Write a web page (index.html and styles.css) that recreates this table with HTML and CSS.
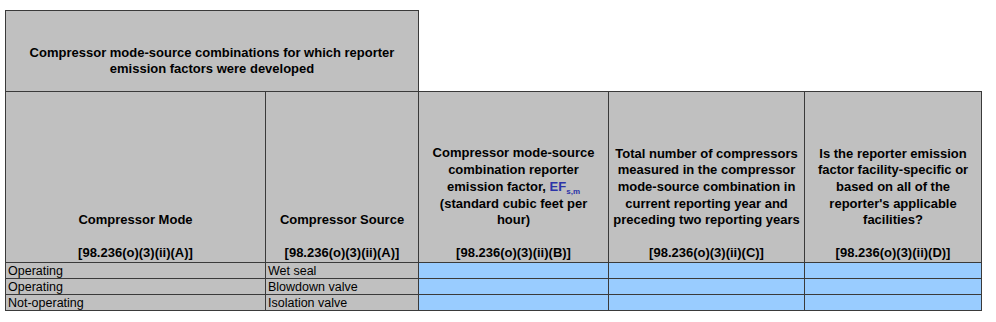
FILE: index.html
```html
<!DOCTYPE html>
<html>
<head>
<meta charset="utf-8">
<link rel="stylesheet" href="styles.css">
</head>
<body>
<table class="sheet">
  <colgroup>
    <col class="c1"><col class="c2"><col class="c3"><col class="c4"><col class="c5">
  </colgroup>
  <tr class="r-title">
    <td class="hd title" colspan="2">Compressor mode-source combinations for which reporter<br>emission factors were developed</td>
    <td class="blank" colspan="3"></td>
  </tr>
  <tr class="r-head">
    <td class="hd">Compressor Mode<br><br>[98.236(o)(3)(ii)(A)]</td>
    <td class="hd">Compressor Source<br><br>[98.236(o)(3)(ii)(A)]</td>
    <td class="hd">Compressor mode-source<br>combination reporter<br>emission factor, <span class="ef">EF<span class="sub">s,m</span></span><br>(standard cubic feet per<br>hour)<br><br>[98.236(o)(3)(ii)(B)]</td>
    <td class="hd">Total number of compressors<br>measured in the compressor<br>mode-source combination in<br>current reporting year and<br>preceding two reporting years<br><br>[98.236(o)(3)(ii)(C)]</td>
    <td class="hd">Is the reporter emission<br>factor facility-specific or<br>based on all of the<br>reporter's applicable<br>facilities?<br><br>[98.236(o)(3)(ii)(D)]</td>
  </tr>
  <tr class="r-data">
    <td class="lbl">Operating</td><td class="lbl">Wet seal</td><td class="in"></td><td class="in"></td><td class="in"></td>
  </tr>
  <tr class="r-data">
    <td class="lbl">Operating</td><td class="lbl">Blowdown valve</td><td class="in"></td><td class="in"></td><td class="in"></td>
  </tr>
  <tr class="r-data">
    <td class="lbl">Not-operating</td><td class="lbl">Isolation valve</td><td class="in"></td><td class="in"></td><td class="in"></td>
  </tr>
</table>
</body>
</html>
```
FILE: styles.css
```css
html, body {
  margin: 0;
  padding: 0;
  background: #ffffff;
}
body {
  padding: 10px 0 0 5px;
  font-family: "Liberation Sans", Arial, sans-serif;
  color: #000;
}
.sheet {
  border-collapse: collapse;
  table-layout: fixed;
  width: 976px;
}
.c1 { width: 260px; }
.c2 { width: 153px; }
.c3 { width: 190px; }
.c4 { width: 196px; }
.c5 { width: 177px; }
.sheet td {
  border: 1px solid #3a3a3a;
  padding: 0;
  box-sizing: border-box;
}
.hd {
  background: #c0c0c0;
  font-weight: bold;
  font-size: 13px;
  line-height: 16.6px;
  text-align: center;
  vertical-align: bottom;
  white-space: nowrap;
}
.sheet td.title {
  padding-bottom: 13px;
}
.sheet td.blank {
  border: none;
  border-bottom: 1px solid #3a3a3a;
  background: #fff;
}
.r-title { height: 81px; }
.r-head { height: 171px; }
.r-data { height: 16px; }
.lbl {
  background: #c0c0c0;
  font-size: 12.5px;
  line-height: 14px;
  vertical-align: bottom;
}
.sheet td.lbl { padding-left: 2px; }
.in {
  background: #99ccff;
}
.ef {
  color: #2b33a8;
}
.ef .sub {
  display: inline-block;
  font-size: 8px;
  line-height: 8px;
  vertical-align: -3px;
}
```
